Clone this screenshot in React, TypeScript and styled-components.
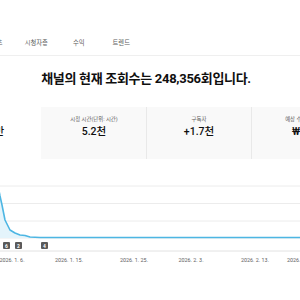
import React from 'react';
import styled, { createGlobalStyle } from 'styled-components';

const GlobalStyle = createGlobalStyle`
  html, body {
    margin: 0;
    padding: 0;
    background: #ffffff;
    overflow: hidden;
  }
  body {
    font-family: Roboto, "Noto Sans CJK KR", sans-serif;
    color: #0f0f0f;
  }
`;

// the studio page is wider than the window and scrolled a little to the right
const Page = styled.div`
  width: 420px;
  margin-left: -64px;
`;

const TabBar = styled.nav`
  display: flex;
  align-items: flex-end;
  height: 55px;
  border-bottom: 1px solid #efefef;
`;

const TabList = styled.div`
  display: flex;
  margin-left: -6px;
`;

const Tab = styled.div<{ $active?: boolean }>`
  width: 42.5px;
  height: 24px;
  line-height: 24px;
  text-align: center;
  font-size: 6.3px;
  white-space: nowrap;
  color: ${({ $active }) => ($active ? '#0f0f0f' : '#606060')};
`;

const Heading = styled.h1`
  margin: 15px 0 0;
  font-size: 13px;
  line-height: 16px;
  font-weight: 700;
  letter-spacing: -0.3px;
  text-align: center;
  color: #0f0f0f;
`;

const Cards = styled.div`
  display: grid;
  grid-template-columns: repeat(4, 1fr);
  margin-top: 20px;
  height: 52px;
`;

const Card = styled.div<{ $selected?: boolean; $divider?: boolean }>`
  display: flex;
  flex-direction: column;
  align-items: center;
  padding-top: 8px;
  background: ${({ $selected }) => ($selected ? '#ffffff' : '#f9f9f9')};
  border-left: 1px solid ${({ $divider }) => ($divider ? '#e9e9e9' : 'transparent')};
  white-space: nowrap;
`;

const CardLabel = styled.div`
  font-size: 5.4px;
  line-height: 8px;
  color: #606060;
`;

const CardValue = styled.div`
  margin-top: 2px;
  font-size: 10.5px;
  line-height: 14px;
  font-weight: 500;
  color: #0f0f0f;
`;

const Chart = styled.svg`
  display: block;
  width: 420px;
  height: 110px;
  font-family: Roboto, "Noto Sans CJK KR", sans-serif;
`;

const tabs = ['개요', '콘텐츠', '시청자층', '수익', '트렌드'];

const metrics = [
  { label: '조회수', value: '24.8만' },
  { label: '시청 시간(단위: 시간)', value: '5.2천' },
  { label: '구독자', value: '+1.7천' },
  { label: '예상 수익 (KRW)', value: '₩8만' },
];

const gridLines = [27, 44.5, 62, 79];

const points: [number, number][] = [
  [52, 4], [60, 16], [64, 37], [66, 46], [69, 61], [74, 71], [79, 74],
  [84, 76], [89, 76.5], [94, 78], [104, 78.5], [420, 78.5],
];

const markers = [
  { x: 67, n: '6' },
  { x: 79, n: '2' },
  { x: 105, n: '4' },
];

const dates = [
  { x: 76, t: '2026. 1. 6.' },
  { x: 133, t: '2026. 1. 15.' },
  { x: 198, t: '2026. 1. 25.' },
  { x: 255, t: '2026. 2. 3.' },
  { x: 319, t: '2026. 2. 13.' },
  { x: 365, t: '2026. 2. 22.' },
];

const ViewsChart = () => {
  const line = points.map(([x, y], i) => `${i ? 'L' : 'M'}${x},${y}`).join(' ');
  const area = `${line} L420,79 L52,79 Z`;
  return (
    <Chart viewBox="0 0 420 110">
      {gridLines.map((y) => (
        <line key={y} x1={0} x2={420} y1={y} y2={y} stroke="#ececec" strokeWidth={1} />
      ))}
      <line x1={0} x2={420} y1={92} y2={92} stroke="#e2e2e2" strokeWidth={1} />
      <path d={area} fill="#e4f4fb" />
      <path d={line} fill="none" stroke="#4db6e3" strokeWidth={1.6} strokeLinejoin="round" />
      {markers.map((m) => (
        <g key={m.x}>
          <rect x={m.x} y={83} width={7} height={7} rx={1} fill="#5a5a5a" />
          <text x={m.x + 3.5} y={88.6} fontSize={5} fontWeight={700} fill="#ffffff" textAnchor="middle">
            {m.n}
          </text>
        </g>
      ))}
      {dates.map((d) => (
        <text key={d.t} x={d.x} y={103} fontSize={5.4} fill="#606060" textAnchor="middle">
          {d.t}
        </text>
      ))}
    </Chart>
  );
};

export default function App() {
  return (
    <>
      <GlobalStyle />
      <Page>
        <TabBar>
          <TabList>
            {tabs.map((t) => (
              <Tab key={t}>{t}</Tab>
            ))}
          </TabList>
        </TabBar>
        <Heading>채널의 현재 조회수는 248,356회입니다.</Heading>
        <Cards>
          {metrics.map((m, i) => (
            <Card key={m.label} $selected={i === 0} $divider={i > 1}>
              <CardLabel>{m.label}</CardLabel>
              <CardValue>{m.value}</CardValue>
            </Card>
          ))}
        </Cards>
        <ViewsChart />
      </Page>
    </>
  );
}
